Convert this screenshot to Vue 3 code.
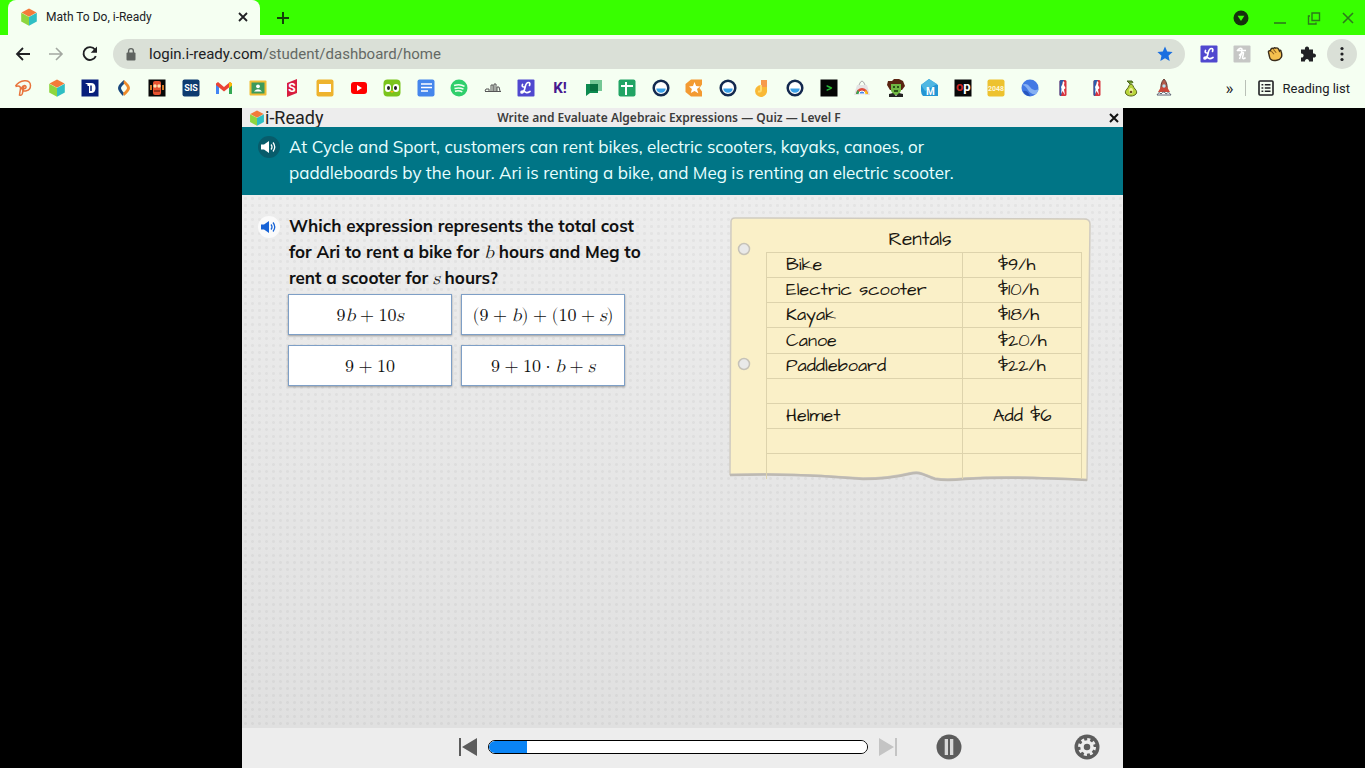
<template>
  <div class="browser">
    <header class="chrome">
      <div class="tab-strip">
        <div class="tab">
          <svg class="icon-18" viewBox="0 0 18 18" v-html="cube"></svg>
          <span class="tab-title">Math To Do, i-Ready</span>
          <button class="icon-button" aria-label="Close tab">
            <svg class="icon-10" viewBox="0 0 10 10">
              <path d="M1 1l8 8M9 1l-8 8" stroke="#202124" stroke-width="1.8" />
            </svg>
          </button>
        </div>
        <button class="icon-button new-tab" aria-label="New tab">
          <svg class="icon-14" viewBox="0 0 14 14">
            <path d="M7 1v12M1 7h12" stroke="#14400a" stroke-width="2" />
          </svg>
        </button>
        <div class="window-controls">
          <button class="icon-button" aria-label="Search tabs">
            <svg class="icon-16" viewBox="0 0 16 16">
              <circle cx="8" cy="8" r="7.5" fill="#16300e" />
              <path d="M4.6 5.8h6.8L8 11z" fill="#38ff00" />
            </svg>
          </button>
          <button class="icon-button" aria-label="Minimize">
            <svg class="icon-14" viewBox="0 0 14 14">
              <path d="M1 12h12" stroke="#2d7a1b" stroke-width="1.6" />
            </svg>
          </button>
          <button class="icon-button" aria-label="Restore">
            <svg class="icon-14" viewBox="0 0 14 14" fill="none" stroke="#2d7a1b" stroke-width="1.4">
              <path d="M5 2h7.500v7.500H5zM3 5H1.500v8H9v-1.500" />
            </svg>
          </button>
          <button class="icon-button" aria-label="Close window">
            <svg class="icon-14" viewBox="0 0 14 14">
              <path d="M2 2l10 10M12 2L2 12" stroke="#2d7a1b" stroke-width="1.6" />
            </svg>
          </button>
        </div>
      </div>

      <div class="toolbar">
        <button class="icon-button" aria-label="Back">
          <svg class="icon-16" viewBox="0 0 16 16" fill="none" stroke="#202124" stroke-width="1.8">
            <path d="M15 8H2M8 2L2 8l6 6" />
          </svg>
        </button>
        <button class="icon-button" aria-label="Forward">
          <svg class="icon-16" viewBox="0 0 16 16" fill="none" stroke="#a3a8a1" stroke-width="1.6">
            <path d="M1 8h13M8 2l6 6-6 6" />
          </svg>
        </button>
        <button class="icon-button" aria-label="Reload">
          <svg class="icon-18" viewBox="0 0 18 18">
            <path d="M14.8 11.2A6.4 6.4 0 1 1 14 4.6" fill="none" stroke="#202124" stroke-width="1.9" />
            <path d="M16 1.5v6.3H9.7z" fill="#202124" />
          </svg>
        </button>
        <div class="address">
          <svg class="icon-14" viewBox="0 0 14 14">
            <rect x="2.5" y="5.5" width="9" height="8" rx="1" fill="#5f6360" />
            <path d="M4.6 6V4a2.4 2.4 0 0 1 4.8 0v2" fill="none" stroke="#5f6360" stroke-width="1.4" />
          </svg>
          <a class="url" href="#"><span class="host">login.i-ready.com</span>/student/dashboard/home</a>
          <button class="icon-button" aria-label="Bookmark this tab">
            <svg class="icon-16" viewBox="0 0 16 16">
              <path d="M8 .6l2.2 5 5.4.5-4.1 3.6 1.2 5.3L8 12.2 3.3 15l1.2-5.3L.4 6.1l5.4-.5z" fill="#1a6fe0" />
            </svg>
          </button>
        </div>
        <div class="extensions">
          <button v-for="ext in extensions" :key="ext.name" class="icon-button" :aria-label="ext.name">
            <svg class="icon-18" viewBox="0 0 18 18" v-html="ext.art"></svg>
          </button>
        </div>
        <button class="icon-button menu" aria-label="Menu">
          <svg class="icon-18" viewBox="0 0 18 18" fill="#202124">
            <circle cx="9" cy="3.5" r="1.6" />
            <circle cx="9" cy="9" r="1.6" />
            <circle cx="9" cy="14.5" r="1.6" />
          </svg>
        </button>
      </div>

      <nav class="bookmarks">
        <div class="bookmark-list">
          <a v-for="(mark, i) in bookmarks" :key="i" href="#" :aria-label="mark.name">
            <svg class="icon-18" viewBox="0 0 18 18" v-html="mark.art"></svg>
          </a>
        </div>
        <div class="reading">
          <button class="icon-button more" aria-label="More bookmarks">»</button>
          <button class="reading-list">
            <svg class="icon-16" viewBox="0 0 16 16" fill="none" stroke="#202124" stroke-width="1.6">
              <rect x="1" y="1" width="14" height="14" rx="1" />
              <path d="M3.5 4.8h1.8M3.5 8h1.8M3.5 11.2h1.8M6.8 4.8h5.7M6.8 8h5.7M6.8 11.2h5.7" />
            </svg>
            Reading list
          </button>
        </div>
      </nav>
    </header>

    <main class="viewport">
      <div class="lesson">
        <div class="lesson-bar">
          <div class="brand">
            <svg class="icon-16" viewBox="0 0 18 18" v-html="cube"></svg>
            <span>i-Ready</span>
          </div>
          <h1>Write and Evaluate Algebraic Expressions — Quiz — Level F</h1>
          <button class="icon-button" aria-label="Close lesson">
            <svg class="icon-10" viewBox="0 0 10 10">
              <path d="M1 1l8 8M9 1l-8 8" stroke="#111" stroke-width="2" />
            </svg>
          </button>
        </div>

        <section class="intro">
          <button class="speaker dark" aria-label="Read the introduction aloud">
            <svg class="icon-16" viewBox="0 0 16 16" v-html="speaker"></svg>
          </button>
          <p>
            At Cycle and Sport, customers can rent bikes, electric scooters, kayaks, canoes, or<br />
            paddleboards by the hour. Ari is renting a bike, and Meg is renting an electric scooter.
          </p>
        </section>

        <div class="work-area">
          <section class="question">
            <button class="speaker light" aria-label="Read the question aloud">
              <svg class="icon-16" viewBox="0 0 16 16" v-html="speaker"></svg>
            </button>
            <div>
              <h2>
                Which expression represents the total cost<br />
                for Ari to rent a bike for <i>b</i> hours and Meg to<br />
                rent a scooter for <i>s</i> hours?
              </h2>
              <div class="answers">
                <button
                  v-for="(answer, i) in answers"
                  :key="i"
                  class="answer"
                  @click="selected = i"
                  v-html="answer"
                ></button>
              </div>
            </div>
          </section>

          <div class="note">
            <svg class="paper" viewBox="0 0 362 266" preserveAspectRatio="none">
              <path
                d="M2 6Q2 2 6 2L355 3Q361 3 361 8L358 264Q280 259 236 262Q217 264 206 262C194 258 192 254 180 257Q160 262 134 262L92 259.500Q50 257 1 258.500Z"
                fill="#faf0c8"
                stroke="#d0cbc0"
                stroke-width="1.5"
              />
              <path
                d="M1 259Q50 257.500 92 260L134 263Q160 263 180 258C192 255 194 259 206 263Q217 265 236 263Q280 260 358 264"
                fill="none"
                stroke="#bdb9b2"
                stroke-width="2.5"
              />
              <g fill="#e9e9e9" stroke="#c6c2b8" stroke-width="1.5">
                <circle cx="15" cy="33" r="5.500" />
                <circle cx="15" cy="148" r="5.500" />
              </g>
            </svg>
            <table>
              <caption>Rentals</caption>
              <tbody>
                <tr v-for="(row, i) in rentals" :key="i">
                  <td>{{ row.item }}</td>
                  <td :class="{ extra: row.item === 'Helmet' }">{{ row.price }}</td>
                </tr>
              </tbody>
            </table>
          </div>
        </div>

        <footer class="player">
          <button class="icon-button" aria-label="Previous">
            <svg class="icon-20" viewBox="0 0 20 20" fill="#5c5c5c">
              <path d="M1 1h2v18H1zM19 1v18L4 10z" />
            </svg>
          </button>
          <progress aria-label="Lesson progress" value="10" max="100"></progress>
          <button class="icon-button" aria-label="Next">
            <svg class="icon-20" viewBox="0 0 20 20" fill="#c4c4c4">
              <path d="M17 1h2v18h-2zM1 1v18l15-9z" />
            </svg>
          </button>
          <button class="icon-button pause" aria-label="Pause">
            <svg class="icon-26" viewBox="0 0 26 26">
              <circle cx="13" cy="13" r="12.5" fill="#5c5c5c" />
              <path d="M8.700 5h3.300v16H8.700zM14 5h3.300v16H14z" fill="#d8d8d8" />
            </svg>
          </button>
          <button class="icon-button" aria-label="Settings">
            <svg class="icon-26" viewBox="0 0 26 26">
              <circle cx="13" cy="13" r="12.5" fill="#5c5c5c" />
              <g stroke="#ededed" fill="none">
                <circle cx="13" cy="13" r="5" stroke-width="3.5" />
                <circle cx="13" cy="13" r="7.500" stroke-width="3" stroke-dasharray="3 2.890" />
              </g>
            </svg>
          </button>
        </footer>
      </div>
    </main>
  </div>
</template>

<script setup>
import { ref } from "vue";

const selected = ref(null);

// operators are set with quarter-em spaces
const answers = [
  "9<i>b</i> + 10<i>s</i>",
  "(9 + <i>b</i>) + (10 + <i>s</i>)",
  "9 + 10",
  "9 + 10 · <i>b</i> + <i>s</i>",
].map((text) => text.replaceAll(" ", "&#8197;"));

const rentals = [
  { item: "Bike", price: "$9/h" },
  { item: "Electric scooter", price: "$10/h" },
  { item: "Kayak", price: "$18/h" },
  { item: "Canoe", price: "$20/h" },
  { item: "Paddleboard", price: "$22/h" },
  { item: "", price: "" },
  { item: "Helmet", price: "Add $6" },
  { item: "", price: "" },
  { item: "", price: "" },
];

const cube =
  '<path d="M9 .5l7.500 4L9 8.700 1.500 4.500z" fill="#f47b3a"/><path d="M1.200 4.700L9 9v8.700L1.200 13.500z" fill="#8ed63f"/><path d="M16.800 4.700L9 9v8.700l7.800-4.200z" fill="#2fbfc4"/>';

const speaker =
  '<path d="M0 5.500h3L8 2v12l-5-3.500H0z" fill="currentColor"/><path d="M10 5.500q2 2.500 0 5M12 3.500q3.500 4.500 0 9" fill="none" stroke="currentColor" stroke-width="1.300"/>';

const tile = (color, inner = "", r = 2) =>
  `<rect x=".5" y=".5" width="17" height="17" rx="${r}" fill="${color}"/>${inner}`;

const label = (text, size, color = "#fff", y = 13, style = "font-family='Roboto, sans-serif'") =>
  `<text x="9" y="${y}" text-anchor="middle" font-size="${size}" font-weight="700" fill="${color}" ${style}>${text}</text>`;

const ring =
  '<circle cx="9" cy="9" r="7.300" fill="#fff" stroke="#13294f" stroke-width="2.500"/><path d="M4.300 9.500h9.400a4.700 4.300 0 0 1-9.400 0z" fill="#3aa0e8"/>';

const nba =
  '<rect x="5.500" y="1" width="7" height="16" rx="1.500" fill="#d8343f"/><path d="M7 1h3L8 5l1 5-2 7q-1.500 0-1.500-1.500v-13Q5.500 1 7 1z" fill="#2b5bab"/><path d="M9 2l1.500 1.500L10 6l1.500 3-1.500 1.500 1 5.500-2.500-4-1.500 3 .5-5L7 8l1.500-3z" fill="#fff"/>';

const scriptL = tile(
  "#5048cf",
  '<path d="M12.500 6.500q1-3-1-3-2.500 0-3.500 5T5 14q-1 0-1-1t1.500-1q1.500 0 3 1.200t4.500-.7M7 8Q4.500 8 5.500 5.500" fill="none" stroke="#fff" stroke-width="1.700" stroke-linecap="round"/>',
  1
);

const bookmarks = [
  {
    name: "Pear Deck",
    art: '<path d="M1.500 7c4-6 15-8 15-.5 0 6-8 7-8.500 3.500C7.500 6 12.500 5.500 12 8.500c-.5 2-3 1-5 .5M1.500 7.500q5-1.500 5 2L5.500 16q2.500 1 3-2l1.500-7" fill="none" stroke="#e8743c" stroke-width="1.500"/>',
  },
  { name: "i-Ready", art: cube },
  {
    name: "Dictionary",
    art: tile("#081f7c", '<path d="M4 4h6q4.500 0 4.500 5T10 14H8V7H6.500V5.500z" fill="#fff"/><path d="M10 6.500v5.500" stroke="#081f7c" stroke-width="1.500"/>', 0),
  },
  {
    name: "CommonLit",
    art: '<path d="M9 1Q3 6 3 9t5 8l1-3Q6 10.500 6 9t4-5z" fill="#19477e"/><path d="M9 1q6 5 6 8t-6 8l-1-3q4-3.500 4-5T8.500 4z" fill="#ef8b2c"/>',
  },
  {
    name: "Robot",
    art: tile("#080808", '<rect x="5" y="2" width="8" height="14" rx="2" fill="#e8522f"/><path d="M3 6v5M15 6v5" stroke="#d77b28" stroke-width="2"/><circle cx="7" cy="7" r="1.700" fill="#ffe3b0"/><circle cx="11" cy="7" r="1.700" fill="#ffe3b0"/><path d="M6 12h6" stroke="#461208"/>', 0),
  },
  { name: "SIS", art: tile("#0d3b70", label("SIS", 9, "#fff", 12)) },
  {
    name: "Gmail",
    art: '<path d="M1 5v10h3V8z" fill="#4285f4"/><path d="M17 5v10h-3V8z" fill="#34a853"/><path d="M1 4.500L3 3l6 5 6-5 2 1.500V6l-8 6.500L1 6z" fill="#ea4335"/><path d="M14 4l1-1 2 1.500V6.500L14 9z" fill="#fbbc04"/>',
  },
  {
    name: "Classroom",
    art: '<rect x=".5" y="1.500" width="17" height="15" rx="1" fill="#f0bd34"/><rect x="2.500" y="3.500" width="13" height="11" fill="#3c9a5b"/><circle cx="9" cy="7.300" r="1.900" fill="#fff"/><path d="M5 12.500q4-4.500 8 0z" fill="#fff"/>',
  },
  {
    name: "Scholastic",
    art: '<path d="M4 4l10-4v14L4 18z" fill="#d81e3f"/>' + label("S", 12, "#fff", 13),
  },
  { name: "Slides", art: tile("#eeb32e", '<rect x="3" y="5" width="12" height="8" fill="#fff"/>') },
  {
    name: "YouTube",
    art: '<rect x="1" y="3" width="16" height="12" rx="3" fill="#f00"/><path d="M7 6v6l5-3z" fill="#fff"/>',
  },
  {
    name: "Duolingo",
    art: tile("#7bc41c", '<rect x="2" y="5" width="6" height="8" rx="3" fill="#fff"/><rect x="10" y="5" width="6" height="8" rx="3" fill="#fff"/><ellipse cx="5.500" cy="9" rx="1.500" ry="2" fill="#222"/><ellipse cx="12.500" cy="9" rx="1.500" ry="2" fill="#222"/><path d="M7 12h4l-2 2z" fill="#f6ae1e"/>', 4),
  },
  { name: "Docs", art: tile("#4586ec", '<path d="M4 5h11M4 8.500h11M4 12h7" stroke="#fff" stroke-width="1.600"/>') },
  {
    name: "Spotify",
    art: '<circle cx="9" cy="9" r="8.500" fill="#2fcf6c"/><path d="M4 6.500q6-2 10.500.8M4.500 9.500q5-1.500 9 .7M5 12.200q4-1 7.300.6" fill="none" stroke="#f3fff1" stroke-width="1.500"/>',
  },
  {
    name: "Skyline",
    art: '<path d="M1 12.500h16M1 12l1-2h3v2M7 12V6h2v6M10 12V5h2v7M13 12V8h2l1 4" fill="none" stroke="#555" stroke-width="1"/>',
  },
  { name: "Lexia", art: scriptL },
  { name: "Kahoot", art: label("K!", 15, "#46178f", 14) },
  {
    name: "Chat",
    art: '<path d="M5 1h12v11H5z" fill="#74c795"/><path d="M1 5h12v9H5l-4 3z" fill="#0c8b50"/><path d="M5 5h8v7H5z" fill="#087040"/>',
  },
  { name: "Sheets", art: tile("#21a464", '<path d="M8 3v13M3 7h12" stroke="#fff" stroke-width="2"/>') },
  { name: "Clever", art: ring },
  {
    name: "Star",
    art: '<path d="M6 .5h11v5L14.500 9l2.500 3.500v5H6L.5 13V5z" fill="#f39a32"/><path d="M9.500 3l1.600 4 4 .4-3.100 2.600 1.300 4.300-3.800-2.400L5.800 14l1.100-4L4 7.400l4-.4z" fill="#fff"/>',
  },
  { name: "Clever portal", art: ring },
  {
    name: "Notes",
    art: '<path d="M9 1h6v10a6 6 0 1 1-6-5z" fill="#f9b936"/><path d="M9 1h6v7H9z" fill="#f79a4b"/><path d="M9 6v5q0 2-3 1.500" fill="none" stroke="#ffdc71" stroke-width="2"/>',
  },
  { name: "Clever home", art: ring },
  { name: "Terminal", art: tile("#050505", label("&gt;", 12, "#29b638", 13), 0) },
  {
    name: "Chrome store",
    art: '<path d="M6 6q3-8 6 0" fill="none" stroke="#aaa"/><path d="M4 6h10l3 10H1z" fill="#e4e4e4"/><path d="M3 15a6 6 0 0 1 12 0z" fill="#df4b3c"/><path d="M3 15l1.500-4L8 15z" fill="#36a852"/><path d="M15 15l-2-4-3 4z" fill="#fbc116"/><path d="M6 15a3 3 0 0 1 6 0z" fill="#4688ee" stroke="#fff"/>',
  },
  {
    name: "Avatar",
    art: '<path d="M1 2h4l2-2h5l4 2 2 5-3 4H3L0 6z" fill="#5a2412"/><path d="M4 5h10v7l-3 4H7l-3-4z" fill="#70b743"/><path d="M2 15l4-1 3 3 3-3 4 1v3H2z" fill="#222"/><path d="M6 8h2M10 8h2M7 12h4" stroke="#15300b" stroke-width="1.400"/>',
  },
  {
    name: "Mathway",
    art: '<path d="M1 6l8-6 9 6v11H3q-2-2-2-5z" fill="#2496d4"/><path d="M1 6l8-6 8 5-12 7z" fill="#50b7e2"/><text x="6" y="16" font-size="10" font-weight="700" font-family="Roboto, sans-serif" fill="#fff">M</text>',
  },
  {
    name: "OP",
    art: tile("#080808", '<text x="2" y="12" font-size="13" font-weight="700" font-family="Roboto, sans-serif" fill="#cc2626">o<tspan fill="#fff">p</tspan></text>', 0),
  },
  { name: "2048", art: tile("#edc22e", label("2048", 7, "#fff6d5", 12)) },
  {
    name: "Earth",
    art: '<circle cx="9" cy="9" r="8.500" fill="#4379e4"/><path d="M1 6q5-3 8 2t9 2q-1 3-3 5-5 1-8-4T1 6z" fill="#86b0f3"/><path d="M2 12q5-1 7 5-5 0-7-5z" fill="#2756bd"/>',
  },
  { name: "NBA", art: nba },
  { name: "NBA scores", art: nba },
  {
    name: "Pear",
    art: '<path d="M9 5c2 0 2 3 4 5 4 4 0 7-4 7s-8-3-4-7c2-2 2-5 4-5z" fill="#b9d63a" stroke="#58651d"/><path d="M8 5L5 2h5l1 2" fill="#6f9a2c" stroke="#47631b"/><ellipse cx="9" cy="12" rx="2" ry="3" fill="#eff09b"/><circle cx="9" cy="13" r="1.300" fill="#6e501f"/>',
  },
  {
    name: "Rocket",
    art: '<path d="M9 0q4 4 3 12H6Q5 4 9 0z" fill="#b35b4a" stroke="#663b35"/><path d="M6 8l-3 5h12l-3-5z" fill="#c9483a"/><circle cx="9" cy="7" r="1.700" fill="#b9e1f0"/><path d="M2 16q2-4 4-1 3-4 5 0 3-3 5 1z" fill="#fff" stroke="#5c6372"/>',
  },
];

const extensions = [
  { name: "Lexia", art: scriptL },
  {
    name: "Honey",
    art: tile("#c6c7c5", '<path d="M4 6q3-4 5-2 0 5-2.500 10M6 10.500q4-4 4.500-2.500L9.500 13q1.500 1.500 3-.5M5 5.500h8" fill="none" stroke="#fff" stroke-width="1.500"/>', 1),
  },
  {
    name: "Wave",
    art: '<g transform="rotate(-12 9 9)"><path d="M3 6q0-2 2-1l1-1.500q1.500-1.500 2.500 0 1.500-1.500 2.500 0 2-.500 2.500 1.500l.5 2q1.500-1.500 1.500.5 1 8-6 8T3 10z" fill="#f5c04e" stroke="#3b2d1b" stroke-width="1.400"/><path d="M6 5.500l2 3.500M8.500 4.500L10.500 8" stroke="#8b5d1e"/></g>',
  },
  {
    name: "Extensions",
    art: '<path d="M2 4.500h4c-1-4 5-4 4 0h4v4c4-1 4 5 0 4v4h-4c.5-3.500-4.500-3.500-4 0H2v-4c3.500.500 3.500-4.500 0-4z" fill="#202124"/>',
  },
];
</script>

<style scoped>
* {
  box-sizing: border-box;
}

.browser {
  display: flex;
  flex-direction: column;
  height: 100vh;
  background: #000;
  font-family: Roboto, sans-serif;
}

button {
  font: inherit;
  color: inherit;
  cursor: pointer;
}

svg {
  display: block;
  flex: none;
}

.icon-button {
  display: flex;
  align-items: center;
  justify-content: center;
  flex: none;
  padding: 0;
  border: 0;
  background: none;
}

.icon-10 {
  width: 10px;
  height: 10px;
}

.icon-14 {
  width: 14px;
  height: 14px;
}

.icon-16 {
  width: 16px;
  height: 16px;
}

.icon-18 {
  width: 18px;
  height: 18px;
}

.icon-20 {
  width: 20px;
  height: 20px;
}

.icon-26 {
  width: 26px;
  height: 26px;
}

/* Browser frame */
.chrome {
  flex: none;
  background: #f5fff2;
}

.tab-strip {
  display: flex;
  align-items: center;
  height: 35px;
  padding: 0 10px 0 8px;
  background: #38ff00;
}

.tab {
  display: flex;
  align-items: center;
  gap: 8px;
  width: 252px;
  height: 35px;
  padding: 0 12px 2px;
  border-radius: 8px 8px 0 0;
  background: #f5fff2;
}

.tab-title {
  flex: 1;
  color: #202124;
  font-size: 12px;
}

.new-tab {
  margin-left: 16px;
}

.window-controls {
  display: flex;
  align-items: center;
  gap: 20px;
  margin-left: auto;
}

.window-controls .icon-button:first-child {
  margin-right: 4px;
}

.toolbar {
  display: flex;
  align-items: center;
  gap: 17px;
  height: 37px;
  padding: 0 8px 0 15px;
}

.address {
  display: flex;
  flex: 1;
  align-items: center;
  gap: 11px;
  height: 30px;
  margin: 0 -2px 0 -3px;
  padding: 0 12px 0 11px;
  border-radius: 15px;
  background: #dae0d7;
}

.url {
  flex: 1;
  color: #646965;
  font-size: 15px;
  text-decoration: none;
}

.host {
  color: #202124;
}

.extensions {
  display: flex;
  align-items: center;
  gap: 15px;
  margin-right: -7px;
}

.menu {
  width: 30px;
  height: 30px;
  border-radius: 50%;
  background: #dae0d7;
}

.bookmarks {
  display: flex;
  align-items: center;
  height: 36px;
  padding: 0 15px 4px 14px;
  color: #202124;
  font-size: 13px;
}

.bookmark-list {
  display: flex;
  flex: 1;
  justify-content: space-between;
}

.reading {
  display: flex;
  align-items: center;
  padding-left: 52px;
}

.more {
  font-size: 17px;
}

.reading-list {
  display: flex;
  align-items: center;
  gap: 9px;
  margin-left: 11px;
  padding: 0 0 0 12px;
  border: 0;
  border-left: 1px solid #b9c0b7;
  background: none;
}

/* Lesson player */
.viewport {
  display: flex;
  flex: 1;
  justify-content: center;
  min-height: 0;
}

.lesson {
  display: flex;
  flex-direction: column;
  height: 100%;
  max-width: 100%;
  aspect-ratio: 881 / 660;
  background: #ededed;
}

.lesson-bar {
  display: grid;
  grid-template-columns: 1fr auto 1fr;
  align-items: center;
  height: 19px;
  padding: 0 4px 0 7px;
}

.brand {
  display: flex;
  align-items: center;
  color: #222;
  font-size: 18px;
  line-height: 19px;
}

.lesson-bar h1 {
  margin: 0;
  padding-right: 30px;
  color: #3c3c3c;
  font-family: "Noto Sans", sans-serif;
  font-size: 12px;
  font-weight: 600;
  line-height: 19px;
}

.lesson-bar .icon-button {
  justify-self: end;
}

.intro,
.question {
  display: flex;
  align-items: flex-start;
  gap: 9px;
}

.intro {
  padding: 7px 16px 9px;
  background: #007586;
}

.intro p,
.question h2 {
  margin: 0;
  font-family: Muli, Mulish, Lato, sans-serif;
  font-size: 17px;
  line-height: 26px;
}

.intro p {
  color: #e9ffff;
}

.question h2 {
  color: #111;
  font-weight: 700;
}

.speaker {
  display: flex;
  align-items: center;
  justify-content: center;
  width: 22px;
  height: 22px;
  margin-top: 2px;
  padding: 0;
  border: 0;
  border-radius: 50%;
}

.dark {
  background: #075c6b;
  color: #fff;
}

.light {
  margin-top: 3px;
  background: #fafafa;
  color: #1763d6;
}

.work-area {
  display: flex;
  flex: 1;
  align-items: flex-start;
  justify-content: space-between;
  padding: 18px 32px 0 16px;
  background:
    radial-gradient(circle, rgba(0, 0, 0, 0.04) 1px, transparent 2px) 0 0 / 7px 7px,
    linear-gradient(#ededed, #e0e0e0);
}

h2 i,
.answer :deep(i) {
  font-family: KaTeX_Math, "Latin Modern Math", "CMU Serif", "Liberation Serif", serif;
  font-weight: 400;
}

h2 i {
  font-size: 18px;
  line-height: 18px;
}

.answers {
  display: grid;
  grid-template-columns: 164px 164px;
  gap: 10px 9px;
  margin: 3px 0 0 -1px;
}

.answer {
  height: 41px;
  padding: 0;
  border: 1px solid #7e9fc6;
  background: #fff;
  box-shadow: 0 1px 2px rgba(0, 0, 0, 0.35);
  color: #111;
  font-family: KaTeX_Main, "Latin Modern Math", "CMU Serif", "Liberation Serif", serif;
  font-size: 18px;
  white-space: nowrap;
}

.note {
  display: grid;
  align-items: start;
  width: 362px;
  margin-top: 3px;
}

.paper,
.note table {
  grid-area: 1 / 1;
}

.paper {
  width: 100%;
  height: 266px;
}

.note table {
  width: 316px;
  height: 227px;
  margin-left: 37px;
  border-collapse: collapse;
  table-layout: fixed;
  color: #1a1710;
  font-family: "Architects Daughter", Lato, sans-serif;
  font-size: 18px;
  line-height: 22px;
}

.note caption {
  padding: 13px 8px 1px 0;
  font-size: 19px;
}

.note td {
  height: 25px;
  padding: 0 0 0 19px;
  border: 1px solid #ddd3ac;
}

.note td + td {
  width: 119px;
  padding-left: 35px;
}

.note .extra {
  padding-left: 30px;
}

.note tr:last-child td {
  border-bottom: 0;
}

.player {
  display: flex;
  align-items: center;
  gap: 10px;
  height: 40px;
  padding: 0 23px 2px 216px;
}

progress {
  flex: 1;
  height: 14px;
  overflow: hidden;
  border: 1px solid #000;
  border-radius: 7px;
  appearance: none;
  background: #fff;
}

progress::-webkit-progress-bar {
  background: #fff;
}

progress::-webkit-progress-value {
  background: #0a84f5;
}

.pause {
  margin: 0 102px 0 28px;
}
</style>

<style>
body {
  margin: 0;
}
</style>
